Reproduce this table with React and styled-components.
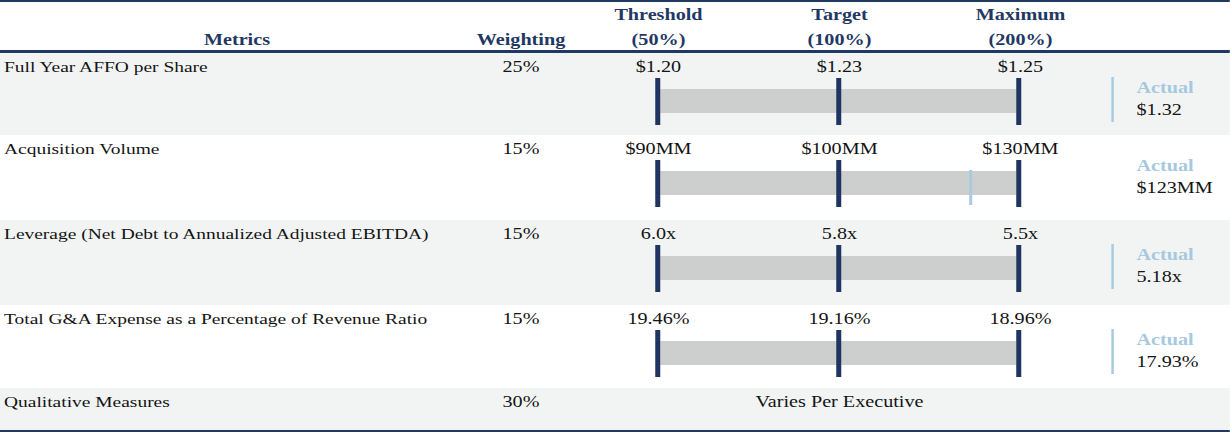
import React from 'react';
import styled, { createGlobalStyle } from 'styled-components';

// the source table is set in a horizontally stretched Times face,
// so the whole sheet is laid out narrow and stretched by S
const S = 1.26;
const u = (n) => `${n / S}px`;

const GlobalStyle = createGlobalStyle`
  body {
    margin: 0;
    background: #ffffff;
    font-family: "Liberation Serif", "Times New Roman", serif;
    overflow: hidden;
  }
`;

const Table = styled.div`
  width: ${u(1230)};
  border-bottom: 2px solid #1f3864;
  color: #141414;
  font-size: 16px;
  transform: scaleX(${S});
  transform-origin: 0 0;
`;

const Header = styled.div`
  display: flex;
  height: 53px;
  box-sizing: border-box;
  border-top: 2px solid #1f3864;
  border-bottom: 3px solid #1f3864;
  color: #1f3864;
  font-weight: bold;
  line-height: 25px;
`;

const HeadCell = styled.div`
  width: ${({ $w }) => u($w)};
  padding-top: ${({ $single }) => ($single ? '25px' : '0')};
  text-align: center;
  flex-shrink: 0;
`;

const Row = styled.div`
  display: flex;
  height: ${({ $h }) => $h}px;
  box-sizing: border-box;
  padding-top: 4px;
  background: ${({ $shade }) => ($shade ? '#f2f4f4' : '#ffffff')};
  line-height: 20px;
`;

const Label = styled.div`
  width: ${u(474)};
  flex-shrink: 0;
  padding-left: ${u(4)};
  box-sizing: border-box;
  font-size: 15.45px;
`;

const Weight = styled.div`
  width: ${u(94)};
  flex-shrink: 0;
  text-align: center;
`;

const Scale = styled.div`
  width: ${u(543)};
  flex-shrink: 0;
`;

const Values = styled.div`
  display: grid;
  grid-template-columns: repeat(3, ${u(181)});
  text-align: center;
`;

const Note = styled.div`
  text-align: center;
`;

const Track = styled.svg`
  display: block;
  margin-top: 1px;
`;

const Actual = styled.div`
  margin-top: ${({ $line }) => ($line ? '20px' : '16px')};
  height: 45px;
  border-left: ${u(3)} solid ${({ $line }) => ($line ? '#a9cbe0' : 'transparent')};
  padding-left: ${u(23)};
  line-height: 22px;
`;

const ActualTag = styled.div`
  color: #a6c9df;
  font-weight: bold;
`;

const TICKS = [87, 268, 448];

const rows = [
  { label: 'Full Year AFFO per Share', weight: '25%', values: ['$1.20', '$1.23', '$1.25'], actual: '$1.32', h: 82, shade: true },
  { label: 'Acquisition Volume', weight: '15%', values: ['$90MM', '$100MM', '$130MM'], actual: '$123MM', marker: 401, h: 85 },
  { label: 'Leverage (Net Debt to Annualized Adjusted EBITDA)', weight: '15%', values: ['6.0x', '5.8x', '5.5x'], actual: '5.18x', h: 85, shade: true },
  { label: 'Total G&A Expense as a Percentage of Revenue Ratio', weight: '15%', values: ['19.46%', '19.16%', '18.96%'], actual: '17.93%', h: 83 },
];

function Bar({ marker }) {
  // drawn in target pixels, squeezed back by the viewBox
  return (
    <Track width={u(543)} height="48" viewBox="0 0 543 48" preserveAspectRatio="none">
      <rect x="92" y="11" width="356" height="24" fill="#cdcfce" />
      {TICKS.map((x) => (
        <rect key={x} x={x} y="0" width="5" height="47" fill="#1f3461" />
      ))}
      {marker && <rect x={marker} y="10" width="3" height="35" fill="#a9cbe0" />}
    </Track>
  );
}

export default function App() {
  return (
    <>
      <GlobalStyle />
      <Table>
        <Header>
          <HeadCell $w={474} $single>Metrics</HeadCell>
          <HeadCell $w={94} $single>Weighting</HeadCell>
          <HeadCell $w={181}>Threshold<br />(50%)</HeadCell>
          <HeadCell $w={181}>Target<br />(100%)</HeadCell>
          <HeadCell $w={181}>Maximum<br />(200%)</HeadCell>
        </Header>

        {rows.map((r) => (
          <Row key={r.label} $h={r.h} $shade={r.shade}>
            <Label>{r.label}</Label>
            <Weight>{r.weight}</Weight>
            <Scale>
              <Values>
                {r.values.map((v) => (
                  <div key={v}>{v}</div>
                ))}
              </Values>
              <Bar marker={r.marker} />
            </Scale>
            <Actual $line={!r.marker}>
              <ActualTag>Actual</ActualTag>
              <div>{r.actual}</div>
            </Actual>
          </Row>
        ))}

        <Row $h={42} $shade>
          <Label>Qualitative Measures</Label>
          <Weight>30%</Weight>
          <Scale>
            <Note>Varies Per Executive</Note>
          </Scale>
        </Row>
      </Table>
    </>
  );
}
